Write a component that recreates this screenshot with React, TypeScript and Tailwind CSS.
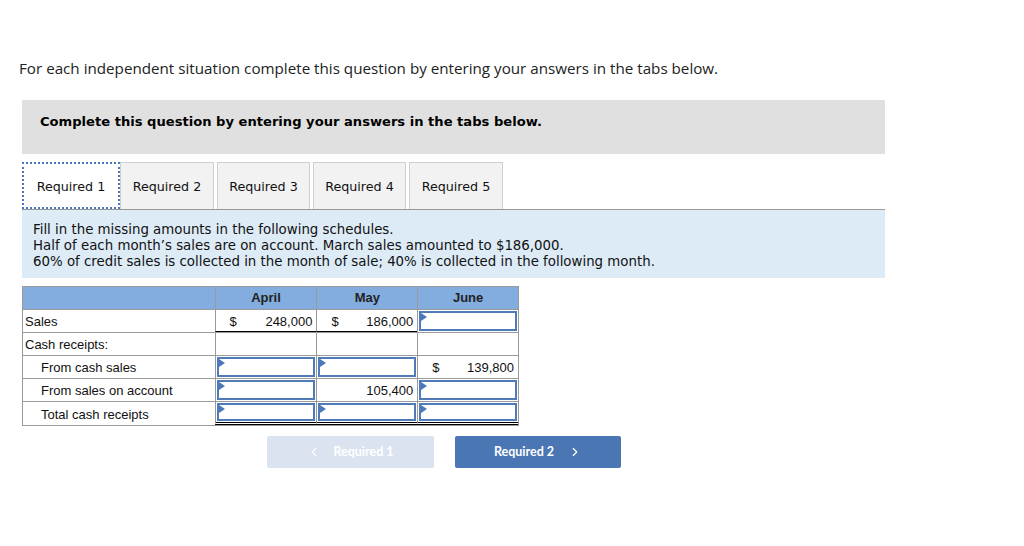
import { ChevronLeft, ChevronRight } from "lucide-react";

const VERDANA = "font-['Verdana','DejaVu_Sans',sans-serif]";
const ARIAL = "font-['Liberation_Sans','Arial',sans-serif]";

const tabs = [
  { label: "Required 1", w: "w-[98px]", ml: "ml-0" },
  { label: "Required 2", w: "w-[94px]", ml: "ml-0" },
  { label: "Required 3", w: "w-[93px]", ml: "ml-[3px]" },
  { label: "Required 4", w: "w-[93px]", ml: "ml-[3px]" },
  { label: "Required 5", w: "w-[94px]", ml: "ml-[3px]" },
];

// cell kinds: "text" = plain value, "input" = blue answer box, "empty" = blank
type Cell = { kind: "text" | "input" | "empty"; dollar?: boolean; value?: string };

const rows: { label: string; indent?: boolean; cells: Cell[]; underline?: boolean; total?: boolean }[] = [
  {
    label: "Sales",
    underline: true,
    cells: [
      { kind: "text", dollar: true, value: "248,000" },
      { kind: "text", dollar: true, value: "186,000" },
      { kind: "input" },
    ],
  },
  { label: "Cash receipts:", cells: [{ kind: "empty" }, { kind: "empty" }, { kind: "empty" }] },
  {
    label: "From cash sales",
    indent: true,
    cells: [{ kind: "input" }, { kind: "input" }, { kind: "text", dollar: true, value: "139,800" }],
  },
  {
    label: "From sales on account",
    indent: true,
    cells: [{ kind: "input" }, { kind: "text", value: "105,400" }, { kind: "input" }],
  },
  {
    label: "Total cash receipts",
    indent: true,
    total: true,
    cells: [{ kind: "input" }, { kind: "input" }, { kind: "input" }],
  },
];

const colW = ["w-[102px]", "w-[101px]", "w-[101px]"];

function Flag() {
  return (
    <span className="absolute left-0 top-0 w-0 h-0 border-t-[4px] border-b-[4px] border-l-[6px] border-t-transparent border-b-transparent border-l-[#4a78ba]" />
  );
}

function ValueCell({ cell, width, underline, total }: { cell: Cell; width: string; underline?: boolean; total?: boolean }) {
  return (
    <div
      className={`${width} h-full border-l border-[#9a9a9a] flex items-stretch ${underline ? "border-b border-b-black" : ""} ${total ? "border-b-[3px] border-b-black border-double" : ""}`}
    >
      {cell.kind === "input" && (
        <div className="relative flex-1 m-[1px] border-2 border-[#4f7bb9] bg-white">
          <Flag />
        </div>
      )}
      {cell.kind === "text" && (
        <div className="flex-1 flex items-center justify-between px-[4px] pl-[14px] pt-[2px]">
          <span>{cell.dollar ? "$" : ""}</span>
          <span>{cell.value}</span>
        </div>
      )}
    </div>
  );
}

export default function App() {
  return (
    <div className="w-[1024px] h-[546px] bg-white pt-[58px] pl-[19px]">
      {/* Intro line */}
      <p className="text-[15.2px] leading-[20px] text-[#222] font-['Open_Sans',sans-serif]">
        For each independent situation complete this question by entering your answers in the tabs below.
      </p>

      <div className="ml-[3px] w-[863px] mt-[22px]">
        {/* Gray banner */}
        <div className={`h-[54px] bg-[#e0e0e0] pl-[18px] pt-[14px] ${VERDANA}`}>
          <p className="text-[13.1px] leading-[16px] font-bold text-black">
            Complete this question by entering your answers in the tabs below.
          </p>
        </div>

        {/* Tabs */}
        <div className={`mt-[8px] flex h-[47px] ${VERDANA}`}>
          {tabs.map((t, i) => (
            <div
              key={t.label}
              className={`${t.w} ${t.ml} h-full flex items-center justify-center pt-[2px] text-[12.7px] text-[#111] ${
                i === 0
                  ? "bg-white border-2 border-dotted border-[#4a78ba]"
                  : "bg-[#f2f2f2] border border-b-0 border-[#cfcfcf]"
              }`}
            >
              {t.label}
            </div>
          ))}
        </div>

        {/* Info panel */}
        <div className={`h-[69px] bg-[#ddebf7] border-t border-[#9a9a9a] pl-[11px] pt-[12px] text-[13.35px] leading-[16px] text-[#111] ${VERDANA}`}>
          <p>Fill in the missing amounts in the following schedules.</p>
          <p>Half of each month’s sales are on account. March sales amounted to $186,000.</p>
          <p>60% of credit sales is collected in the month of sale; 40% is collected in the following month.</p>
        </div>

        {/* Schedule table */}
        <div className={`mt-[8px] w-[497px] border border-[#9a9a9a] text-[13px] text-[#111] ${ARIAL}`}>
          <div className="flex h-[23px] bg-[#83addf] border-b border-[#9a9a9a] font-bold text-[#222]">
            <div className="w-[192px]" />
            {["April", "May", "June"].map((m, i) => (
              <div key={m} className={`${colW[i]} border-l border-[#9a9a9a] flex items-center justify-center`}>
                {m}
              </div>
            ))}
          </div>
          {rows.map((r, ri) => (
            <div key={r.label} className={`flex h-[23px] ${ri < rows.length - 1 ? "border-b border-[#9a9a9a]" : ""}`}>
              <div className={`w-[192px] flex items-center pt-[2px] ${r.indent ? "pl-[18px]" : "pl-[2px]"}`}>{r.label}</div>
              {r.cells.map((c, ci) => (
                <ValueCell key={ci} cell={c} width={colW[ci]} underline={r.underline && ci < 2} total={r.total} />
              ))}
            </div>
          ))}
        </div>

        {/* Navigation buttons */}
        <div className="mt-[10px] ml-[245px] flex gap-[21px] font-['Lato','Open_Sans',sans-serif]">
          <button className="w-[167px] h-[32px] rounded-[2px] bg-[#dae3ef] text-white text-[12.5px] font-bold flex items-center justify-center gap-[12px]">
            <ChevronLeft size={14} strokeWidth={2} />
            <span>Required 1</span>
          </button>
          <button className="w-[166px] h-[32px] rounded-[2px] bg-[#4a76b3] text-white text-[12.5px] font-bold flex items-center justify-center gap-[14px]">
            <span>Required 2</span>
            <ChevronRight size={14} strokeWidth={2} />
          </button>
        </div>
      </div>
    </div>
  );
}
